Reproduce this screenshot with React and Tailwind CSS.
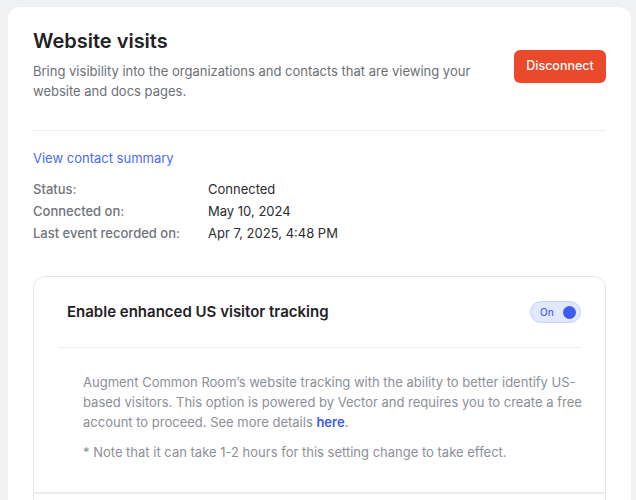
export default function App() {
  return (
    <div
      className="min-h-[500px] bg-[#f0f1f3] pl-2 pr-[5px] pt-[7px]"
      style={{ fontFamily: "Inter, 'Noto Sans', sans-serif" }}
    >
      <div className="rounded-xl bg-white px-[25px] pt-5 pb-10">
        <div className="flex items-center justify-between">
          <div>
            <h1 className="text-[20px] font-semibold leading-7 text-[#1f2125]">Website visits</h1>
            <p className="mt-1.5 w-[460px] text-[13px] leading-5 text-[#6b6f76]">
              Bring visibility into the organizations and contacts that are viewing your website and docs pages.
            </p>
          </div>
          <button className="mt-1 h-[33px] w-[92px] rounded-md bg-[#e84a2b] text-[12.5px] font-medium text-white">
            Disconnect
          </button>
        </div>
        <div className="mt-[29px] h-px bg-[#ececef]" />
        <div className="mt-[17px] text-[13px] leading-5 text-[#4a6cf0]">View contact summary</div>
        <div className="mt-2.5 text-[13px] leading-[22px]">
          <div className="flex">
            <span className="w-[175px] font-medium text-[#70747b]">Status:</span>
            <span className="text-[#2a2c30]">Connected</span>
          </div>
          <div className="flex">
            <span className="w-[175px] font-medium text-[#70747b]">Connected on:</span>
            <span className="text-[#2a2c30]">May 10, 2024</span>
          </div>
          <div className="flex">
            <span className="w-[175px] font-medium text-[#70747b]">Last event recorded on:</span>
            <span className="text-[#2a2c30]">Apr 7, 2025, 4:48 PM</span>
          </div>
        </div>
        <div className="mt-8 rounded-xl border border-[#e6e7ea]">
          <div className="px-6">
            <div className="flex items-center justify-between border-b border-[#ececef] py-6">
              <div className="pl-[9px] text-[15px] font-semibold leading-[22px] text-[#1f2125]">
                Enable enhanced US visitor tracking
              </div>
              <div className="flex h-[22px] w-[51px] items-center justify-between rounded-full border border-[#c9d3f8] bg-[#e1e7fc] pl-[9px] pr-[4px]">
                <span className="text-[10px] font-medium text-[#4a64e8]">On</span>
                <span className="h-[13px] w-[13px] rounded-full bg-[#3d5af1]" />
              </div>
            </div>
            <div className="-mr-3 pl-[25px] pt-[24px] pb-[30px] text-[13px] leading-5 text-[#8b8f97]">
              <p>
                Augment Common Room’s website tracking with the ability to better identify US-based visitors. This option is powered by Vector and requires you to create a free account to proceed. See more details{" "}
                <span className="font-semibold text-[#3d5af1]">here</span>.
              </p>
              <p className="mt-2.5">* Note that it can take 1-2 hours for this setting change to take effect.</p>
            </div>
          </div>
          <div className="h-12 border-t-2 border-[#ececef]" />
        </div>
      </div>
    </div>
  );
}
